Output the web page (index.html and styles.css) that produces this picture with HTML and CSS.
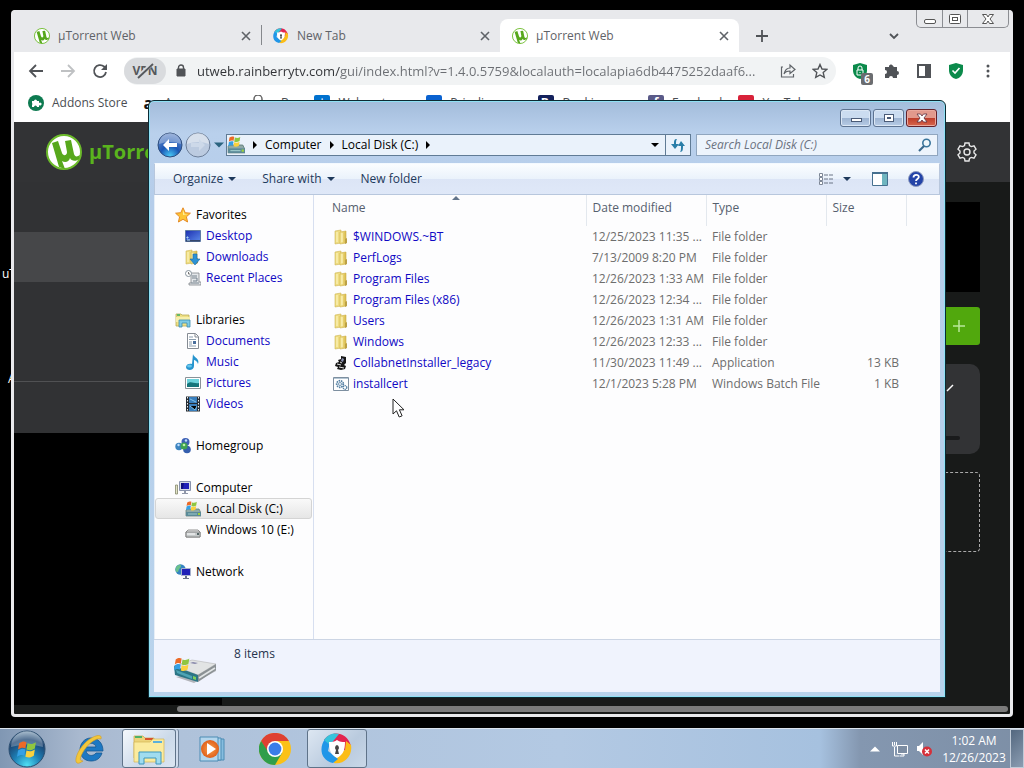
FILE: index.html
```html
<!DOCTYPE html>
<html lang="en">
<head>
  <meta charset="UTF-8">
  <meta name="viewport" content="width=device-width, initial-scale=1.0">
  <title>Local Disk (C:)</title>
  <link rel="stylesheet" href="styles.css">
</head>
<body>
  <svg class="defs" aria-hidden="true">
    <defs>
      <linearGradient id="gold" x1="0" x2="1"><stop offset="0" stop-color="#f8eb9c"/><stop offset="1" stop-color="#d9ba4b"/></linearGradient>
      <linearGradient id="screen" x1="0" x2="1" y2="1"><stop offset="0" stop-color="#1c2fb0"/><stop offset="1" stop-color="#5c8bea"/></linearGradient>
      <linearGradient id="metal" y2="1" x2="0"><stop offset="0" stop-color="#f4f4f4"/><stop offset="1" stop-color="#8d9295"/></linearGradient>
      <radialGradient id="orb" cx=".5" cy=".95" r=".95"><stop offset="0" stop-color="#4fe0f4"/><stop offset=".4" stop-color="#1d7fb5"/><stop offset=".75" stop-color="#1c4370"/><stop offset="1" stop-color="#8ea9bf"/></radialGradient>
      <radialGradient id="blueball" cx=".5" cy=".95" r=".9"><stop offset="0" stop-color="#49c9f5"/><stop offset=".45" stop-color="#1c57b5"/><stop offset="1" stop-color="#6b8fcb"/></radialGradient>
      <radialGradient id="orange"><stop offset="0" stop-color="#f9a04c"/><stop offset="1" stop-color="#e0601b"/></radialGradient>
    </defs>
    <symbol id="utorrent" viewBox="0 0 36 36">
      <circle cx="18" cy="18" r="17" fill="#fff" stroke="#6cbb2b" stroke-width="2"/>
      <path d="M6 9l6-2 4 12c1 3 5 3 5-1l-2-11 6-1 3 14c1 3 3 3 6 1l-1 4c-3 3-8 2-9-1-1 4-5 5-8 3l3 8-6-2z" fill="#57a81c"/>
    </symbol>
    <symbol id="secure" viewBox="0 0 32 32">
      <path d="M3 7C10-3 26-2 30 13l-6 5-8-10-8 4z" fill="#e3244f"/>
      <path d="M30 12c2 12-8 20-17 18l-1-7 12-6 1-9z" fill="#fbbd17"/>
      <path d="M12 30C-1 27-2 14 4 6l5 3-2 9 10 8z" fill="#2196e8"/>
      <path d="M3 7C8 0 14 0 18 1L9 12z" fill="#35c3dc"/>
      <path d="M16 7c3 2 5 2 8 2 0 8-2 13-8 16-6-3-8-8-8-16 3 0 5 0 8-2z" fill="#fff"/>
      <path d="M16 12a3 3 0 0 1 1 5l1 4h-4l1-4a3 3 0 0 1 1-5z" fill="#444"/>
    </symbol>
    <symbol id="close" viewBox="0 0 16 16"><path d="M4 4l8 8M12 4l-8 8" stroke="#5f6368" stroke-width="1.6"/></symbol>
    <symbol id="flag" viewBox="0 0 20 20">
      <path d="M2 4c3-2 5-2 7-1L8 9c-2-1-4-1-7 1z" fill="#ec6a27"/>
      <path d="M10 4c3 1 5 1 8-1l-1 6c-3 2-5 2-8 1z" fill="#8fc640"/>
      <path d="M1 11c3-2 5-2 7-1l-1 6c-2-1-4-1-7 1z" fill="#35a0e4"/>
      <path d="M9 11c3 1 5 1 8-1l-1 6c-3 2-5 2-8 1z" fill="#fbd13d"/>
    </symbol>
    <symbol id="disk" viewBox="0 0 16 16">
      <path d="M1 9l1-1h12l2 4v3H1z" fill="#8fa9a8" stroke="#587570" stroke-width=".7"/>
      <path d="M1 11h15v4H1z" fill="#5b8a98"/><path d="M3 13h9" stroke="#9ecacb"/><path d="M13 12h2v2h-2z" fill="#a0d33a"/>
      <use href="#flag" x="1" y="-1" width="12" height="12"/>
    </symbol>
    <symbol id="folder" viewBox="0 0 16 16">
      <path d="M2 2l6-1v13l-6 1z" fill="#eedc80" stroke="#cfb554" stroke-width=".6"/>
      <path d="M7 3l6-1v12l-6 1z" fill="url(#gold)" stroke="#cfae43" stroke-width=".6"/>
      <path d="M4 3v10M9 4v9" stroke="#fff8c9"/><path d="M12 10l2-1v5l-2 1z" fill="#bba045"/>
    </symbol>
    <symbol id="tri" viewBox="0 0 8 8"><path d="M0 2h8L4 6z" fill="currentColor"/></symbol>
    <symbol id="right" viewBox="0 0 8 8"><path d="M2 0v8l4-4z" fill="currentColor"/></symbol>
  </svg>

  <main class="desktop">
    <span class="desk-label label-one">uTorrent</span>
    <span class="desk-label label-two">Apps</span>

    <!-- Browser -->
    <section class="browser">
      <div class="tab-strip">
        <div class="tab">
          <svg class="i16"><use href="#utorrent"/></svg><span>µTorrent Web</span>
          <button aria-label="Close tab"><svg class="i16"><use href="#close"/></svg></button>
        </div>
        <div class="tab divided">
          <svg class="i16"><use href="#secure"/></svg><span>New Tab</span>
          <button aria-label="Close tab"><svg class="i16"><use href="#close"/></svg></button>
        </div>
        <div class="tab active">
          <svg class="i16"><use href="#utorrent"/></svg><span>µTorrent Web</span>
          <button aria-label="Close tab"><svg class="i16"><use href="#close"/></svg></button>
        </div>
        <button class="new-tab" aria-label="New tab"><svg class="i16" viewBox="0 0 16 16"><path d="M8 2v12M2 8h12" stroke="#505357" stroke-width="1.8"/></svg></button>
        <button class="tab-search" aria-label="Search tabs"><svg class="i16" viewBox="0 0 16 16"><path d="M4 6l4 4 4-4" fill="none" stroke="#505357" stroke-width="1.8"/></svg></button>
        <div class="caption ghost">
          <button aria-label="Minimize"><svg viewBox="0 0 16 12"><rect x="2.500" y="6.500" width="11" height="4" rx="1.500" fill="#fff" stroke="#555"/></svg></button>
          <button aria-label="Maximize"><svg viewBox="0 0 16 12"><rect x="2.500" y="1.500" width="11" height="9" rx="1" fill="#fff" stroke="#555"/><rect x="5.500" y="4.500" width="5" height="3" fill="#fff" stroke="#555"/></svg></button>
          <button class="wide" aria-label="Close"><svg viewBox="0 0 16 12"><path d="M2.500 1.500h4L8 4l1.500-2.500h4L10 6l3.500 4.500h-4L8 8l-1.500 2.500h-4L6 6z" fill="#fff" stroke="#555"/></svg></button>
        </div>
      </div>

      <div class="toolbar">
        <button aria-label="Back"><svg class="i16" viewBox="0 0 16 16"><path d="M15 8H2M8 2L2 8l6 6" fill="none" stroke="#505357" stroke-width="1.8"/></svg></button>
        <button aria-label="Forward"><svg class="i16" viewBox="0 0 16 16"><path d="M1 8h13M8 2l6 6-6 6" fill="none" stroke="#bfc1c3" stroke-width="1.800"/></svg></button>
        <button aria-label="Reload"><svg class="i16" viewBox="0 0 16 16"><path d="M14 9a6 6 0 1 1-2-5.500l2 2" fill="none" stroke="#505357" stroke-width="1.800"/><path d="M15 1v6H9z" fill="#505357"/></svg></button>
        <div class="omnibox">
          <button class="vpn" aria-label="VPN off">VPN<svg viewBox="0 0 24 16"><path d="M5 14L19 1" stroke="#d9dbde" stroke-width="4"/><path d="M5 15L20 1" stroke="#55585c" stroke-width="1.800"/></svg></button>
          <svg class="lock" viewBox="0 0 12 14"><path d="M2 5h8v7H2z" fill="#505357" stroke="#505357"/><path d="M3.500 6V3.500a2.500 2.500 0 0 1 5 0V6" fill="none" stroke="#505357" stroke-width="1.400"/></svg>
          <input type="text" aria-label="Address" value="utweb.rainberrytv.com/gui/index.html?v=1.4.0.5759&amp;localauth=localapia6db4475252daaf6...">
          <button aria-label="Share"><svg class="i16" viewBox="0 0 16 16"><path d="M3 4H1.500v10h12v-3M4 11c1-4 3-6 6-6V2l5 4.500-5 4V8c-3 0-5 1-6 3z" fill="none" stroke="#5f6368" stroke-width="1.200"/></svg></button>
          <button aria-label="Bookmark"><svg class="i16" viewBox="0 0 16 16"><path d="M8 1.500l2 4.500 4.800.4-3.600 3.200 1.100 4.800L8 12l-4.300 2.400 1.100-4.800L1.200 6.400 6 6z" fill="none" stroke="#505357" stroke-width="1.400"/></svg></button>
        </div>
        <button class="badged" aria-label="Ad blocker"><svg class="i16" viewBox="0 0 16 16"><path d="M8 0l7 2v5c0 5-3 8-7 9-4-1-7-4-7-9V2z" fill="#0b8a4b"/><path d="M5 7h6v5H5zM6 7V5a2 2 0 0 1 4 0v2M8 9v1" fill="none" stroke="#fff"/></svg><span class="badge">6</span></button>
        <button aria-label="Extensions"><svg class="i16" viewBox="0 0 16 16"><path d="M1 4h4a2 2 0 1 1 4-1l1 1h3v4a2 2 0 1 1 0 4v3H9a2 2 0 1 0-4 0H1v-4a2 2 0 1 0 0-4z" fill="#505357"/></svg></button>
        <button aria-label="Side panel"><svg class="i16" viewBox="0 0 16 16"><path d="M2 2h12v12H2z" fill="none" stroke="#505357" stroke-width="2"/><path d="M9 2h5v12H9z" fill="#505357"/></svg></button>
        <button aria-label="Protection"><svg class="i16" viewBox="0 0 16 16"><path d="M8 0l7 2v5c0 5-3 8-7 9-4-1-7-4-7-9V2z" fill="#0b8a4b"/><path d="M4.500 7.500L7 10l4.500-5" fill="none" stroke="#fff" stroke-width="1.600"/></svg></button>
        <button aria-label="Menu"><svg class="i16" viewBox="0 0 16 16"><g fill="#505357"><circle cx="8" cy="3" r="1.500"/><circle cx="8" cy="8" r="1.500"/><circle cx="8" cy="13" r="1.500"/></g></svg></button>
      </div>

      <nav class="bookmarks">
        <a href="#"><svg class="i16" viewBox="0 0 16 16"><circle cx="8" cy="8" r="8" fill="#0d7a50"/><path d="M4 6h2a1.500 1.500 0 1 1 3 0h2v2a1.500 1.500 0 1 1 0 2v2H9a1 1 0 0 0-3 0H4v-2a1.500 1.500 0 0 0 0-2z" fill="#fff"/></svg>Addons Store</a>
        <a href="#"><span class="fav amazon">a</span>Amazon.com</a>
        <a href="#"><svg class="i16" viewBox="0 0 16 16"><path d="M4 8V4a4 4 0 0 1 8 0v4" fill="none" stroke="#666" stroke-width="1.500"/></svg>eBay</a>
        <a href="#"><span class="fav walmart">✶</span>Walmart.com</a>
        <a href="#"><span class="fav priceline">p</span>Priceline.com</a>
        <a href="#"><span class="fav booking">B.</span>Booking.com</a>
        <a href="#"><span class="fav facebook">f</span>Facebook</a>
        <a href="#"><span class="fav youtube"></span>YouTube</a>
      </nav>

      <div class="page">
        <header class="page-head">
          <svg class="logo"><use href="#utorrent"/></svg>
          <span class="brand">µTorrent</span>
          <button class="settings" aria-label="Settings"><svg viewBox="0 0 20 20"><path d="M8 1h4l.5 2.600 1.800 1L17 3.800l2 3.400-2 1.800v2l2 1.800-2 3.400-2.700-.8-1.800 1L12 19H8l-.5-2.600-1.800-1L3 16.200l-2-3.400L3 11V9L1 7.200l2-3.400 2.700.8 1.800-1z" fill="none" stroke="#e8e8e8" stroke-width="1.400"/><circle cx="10" cy="10" r="3" fill="none" stroke="#e8e8e8" stroke-width="1.400"/></svg></button>
        </header>
        <div class="page-body">
          <div class="side">
            <div class="side-top"></div>
            <div class="side-active"></div>
            <div class="side-list"></div>
            <div class="side-foot"></div>
          </div>
          <div class="content">
            <div class="player"></div>
            <button class="add" aria-label="Add torrent"><svg class="i16" viewBox="0 0 16 16"><path d="M8 2v12M2 8h12" stroke="#b9e89a" stroke-width="1.500"/></svg></button>
            <div class="card"><svg class="card-tick" viewBox="0 0 8 8"><path d="M1 7l6-6" stroke="#fff" stroke-width="1.400"/></svg><div class="bar"></div></div>
            <div class="drop"></div>
          </div>
        </div>
        <div class="h-scroll"><div class="thumb"></div></div>
      </div>
    </section>

    <!-- Explorer -->
    <section class="explorer">
      <div class="title-bar">
        <div class="caption">
          <button aria-label="Minimize"><svg viewBox="0 0 16 12"><rect x="3.500" y="6.500" width="10" height="3" fill="#fff" stroke="#4a5b77"/></svg></button>
          <button aria-label="Maximize"><svg viewBox="0 0 16 12"><rect x="3.500" y="2.500" width="9" height="7" fill="#fff" stroke="#4a5b77"/><rect x="6.500" y="5.500" width="3" height="1" fill="#8aa0c0" stroke="#4a5b77"/></svg></button>
          <button class="red" aria-label="Close"><svg viewBox="0 0 16 12"><path d="M3 2h3.500L8 4l1.500-2H13L10 6l3 4H9.500L8 8l-1.500 2H3l3-4z" fill="#fff" stroke="#5b3040" stroke-width=".8"/></svg></button>
        </div>
      </div>

      <div class="nav-row">
        <div class="travel">
          <button aria-label="Back"><svg class="i26" viewBox="0 0 26 26"><circle cx="13" cy="13" r="12" fill="url(#blueball)" stroke="#2f4d7d"/><path d="M2 12a11 11 0 0 1 22 0q-11-4-22 0z" fill="#fff" opacity=".3"/><path d="M6 13l6-6v4h8v4h-8v4z" fill="#fff"/></svg></button>
          <button aria-label="Forward"><svg class="i26" viewBox="0 0 26 26"><circle cx="13" cy="13" r="12" fill="#bccbe0" stroke="#6d7f99"/><path d="M2 12a11 11 0 0 1 22 0q-11-4-22 0z" fill="#fff" opacity=".4"/><path d="M20 13l-6-6v4H6v4h8v4z" fill="#cdd9e9"/></svg></button>
          <button aria-label="Recent pages"><svg class="i10 recent"><use href="#tri"/></svg></button>
        </div>
        <div class="address">
          <svg class="i18"><use href="#disk"/></svg>
          <svg class="i8"><use href="#right"/></svg>
          <button>Computer</button>
          <svg class="i8"><use href="#right"/></svg>
          <button>Local Disk (C:)</button>
          <svg class="i8"><use href="#right"/></svg>
          <button class="history" aria-label="Previous locations"><svg class="i8"><use href="#tri"/></svg></button>
          <button class="refresh" aria-label="Refresh"><svg class="i16" viewBox="0 0 16 16"><path d="M7 2C4 2 4 4 4 7H1l4 5 4-5H6c0-2 0-4 1-5zM10 15c3 0 3-3 3-6h2l-4-5-3 5h3c0 3 0 5-1 6z" fill="#2a7ea8"/></svg></button>
        </div>
        <label class="search">
          <input type="text" placeholder="Search Local Disk (C:)" aria-label="Search Local Disk (C:)">
          <svg class="i14" viewBox="0 0 14 14"><circle cx="8.500" cy="5" r="3.700" fill="#eef6fb" stroke="#39759c" stroke-width="1.600"/><path d="M6 8l-5 5" stroke="#39688c" stroke-width="2.200"/></svg>
        </label>
      </div>

      <div class="command-bar">
        <button>Organize<svg class="i8"><use href="#tri"/></svg></button>
        <button>Share with<svg class="i8"><use href="#tri"/></svg></button>
        <button>New folder</button>
        <div class="command-right">
          <button aria-label="Change view"><svg class="i16" viewBox="0 0 16 16"><path d="M1.500 2.500h3v3h-3zM1.500 6.500h3v3h-3zM1.500 10.500h3v3h-3z" fill="#fff" stroke="#7d8796"/><path d="M6 4h4M11 4h4M6 8h4M11 8h4M6 12h4M11 12h4" stroke="#6b7585"/></svg></button>
          <button aria-label="More views"><svg class="i8"><use href="#tri"/></svg></button>
          <button aria-label="Preview pane"><svg class="i16" viewBox="0 0 16 16"><path d="M.5 1.500h15v13H.5z" fill="#fff" stroke="#46708f"/><path d="M0 2h16" stroke="#46708f" stroke-width="2"/><path d="M10 3h5v11h-5z" fill="#6fb5bf"/></svg></button>
          <button aria-label="Help"><svg class="i16" viewBox="0 0 16 16"><circle cx="8" cy="8" r="7.500" fill="#2444a8" stroke="#8f9cc0"/><path d="M5.500 6.500C5.500 3 11 3 10.800 6.200 10.500 8 8 8 8 10M8 11.500v1.800" fill="none" stroke="#fff" stroke-width="1.800"/></svg></button>
        </div>
      </div>

      <div class="panes">
        <nav class="tree">
          <div class="group">
            <a class="head" href="#"><svg class="i16" viewBox="0 0 16 16"><path d="M8 .8l2.200 4.900 5.200.5-4 3.600 1.200 5.200L8 12.300 3.400 15l1.200-5.200-4-3.600 5.200-.5z" fill="#fdc534" stroke="#e58a25"/><path d="M8 3l1.500 4H13l-5 1z" fill="#fff0a0"/></svg>Favorites</a>
            <a href="#"><svg class="i16" viewBox="0 0 16 16"><path d="M.5 2.500h15v11H.5z" fill="url(#screen)" stroke="#5f7ba5"/><path d="M1 12h14v1.500H1z" fill="#34466b"/><path d="M2 9h1v1H2zM2 12h3" stroke="#b4e0ff"/></svg>Desktop</a>
            <a href="#"><svg class="i16" viewBox="0 0 16 16"><use href="#folder" x="-1" width="16" height="16"/><path d="M8 5h4v5h3l-5 6-5-6h3z" fill="#2c92d5" stroke="#1d6aa6" stroke-width=".6"/></svg>Downloads</a>
            <a href="#"><svg class="i16" viewBox="0 0 16 16"><path d="M5 3h9v9h2v3H4v-2h2V4z" fill="#e4e7ea" stroke="#80868c" stroke-width=".8"/><path d="M7 6h5M7 8h5v3H8M6 13h8" stroke="#75818c" fill="none"/><circle cx="3.500" cy="3.500" r="3" fill="#fff" stroke="#87939d"/><path d="M3.500 2v2H5" stroke="#555" fill="none" stroke-width=".8"/></svg>Recent Places</a>
          </div>
          <div class="group">
            <a class="head" href="#"><svg class="i16" viewBox="0 0 16 16"><path d="M1 2h5l1 1h7v11H1z" fill="#eedf84" stroke="#b8ab55" stroke-width=".8"/><path d="M2 2h3v2H2z" fill="#65b968"/><path d="M1 5h14v5H1z" fill="#f7efaa"/><path d="M4 8h11v7h-3v-4H7v4H4z" fill="#7ecbe5" stroke="#3d8eb1" stroke-width=".8"/></svg>Libraries</a>
            <a href="#"><svg class="i16" viewBox="0 0 16 16"><path d="M2.500.5h8l3 3v12h-11z" fill="#fff" stroke="#858b93"/><path d="M10 1v3h3" fill="none" stroke="#858b93"/><path d="M4 4h4M4 6.500h7M4 9h3M4 11h3M4 13h7" stroke="#8b9dae"/><path d="M8 8h3v3H8z" fill="#496e9c"/></svg>Documents</a>
            <a href="#"><svg class="i16" viewBox="0 0 16 16"><path d="M8 0c1 4 7 4 5 10-1-3-3-4-4-4v6c0 5-8 5-8 1 0-3 4-4 6-3z" fill="#2694ce"/><ellipse cx="4.500" cy="12" rx="2.500" ry="1.500" fill="#66c5ec"/></svg>Music</a>
            <a href="#"><svg class="i16" viewBox="0 0 16 16"><path d="M.5 2.500h15v11H.5z" fill="#fff" stroke="#8a9298"/><path d="M2 4h12v8H2z" fill="#6dd3dc"/><path d="M2 9c4-4 6 0 12-1v4H2z" fill="#16757b"/></svg>Pictures</a>
            <a href="#"><svg class="i16" viewBox="0 0 16 16"><path d="M1 .5h14v15H1z" fill="#252d35"/><path d="M4 1h8v6H4zM4 8h8v7H4z" fill="#397ebc"/><path d="M5 3l6 3M5 10l5 4 2-4" stroke="#80c3eb"/><path d="M2.500 1v14M13.500 1v14" stroke="#eee" stroke-dasharray="1.500 1.500"/></svg>Videos</a>
          </div>
          <div class="group">
            <a class="head" href="#"><svg class="i16" viewBox="0 0 16 16"><circle cx="10.500" cy="4" r="4" fill="#3e60b5"/><circle cx="4" cy="8.500" r="3.700" fill="#3c84c0"/><circle cx="12" cy="11.500" r="3.800" fill="#355fae"/><circle cx="9" cy="8" r="3.500" fill="#3fa252"/><circle cx="9" cy="7" r="1.300" fill="#baf0a6"/><circle cx="11" cy="2.500" r="1.200" fill="#bfe0ff"/><circle cx="3.500" cy="7" r="1.200" fill="#bfe0ff"/></svg>Homegroup</a>
          </div>
          <div class="group">
            <a class="head" href="#"><svg class="i16" viewBox="0 0 16 16"><path d="M.5 5h2v9h-2z" fill="#e2e4c6" stroke="#85886c" stroke-width=".8"/><path d="M4.500 1.500h11v9h-11z" fill="#d6dbe4" stroke="#8993ad"/><path d="M6 3h8v6H6z" fill="#2020b8"/><path d="M6 3h3l-1 6H6z" fill="#101080"/><path d="M9 11h2v2h2v1H7v-1h2z" fill="#9198a9"/></svg>Computer</a>
            <a class="plain selected" href="#"><svg class="i16"><use href="#disk"/></svg>Local Disk (C:)</a>
            <a class="plain" href="#"><svg class="i16" viewBox="0 0 16 16"><path d="M1 10l2-2h10l2 2v5H1z" fill="url(#metal)" stroke="#777" stroke-width=".8"/><path d="M1 10h14v5H1z" fill="#c6cacb" stroke="#777" stroke-width=".8"/><path d="M2 12h8" stroke="#fff"/><path d="M12 11h2v2h-2z" fill="#566"/></svg>Windows 10 (E:)</a>
          </div>
          <div class="group">
            <a class="head" href="#"><svg class="i16" viewBox="0 0 16 16"><circle cx="5.500" cy="5.500" r="5.200" fill="#3483c0"/><path d="M2 2c4-3 5 0 3 2S4 8 2 8 0 4 2 2z" fill="#6bc18c"/><path d="M6.500 4.500h9v7h-9z" fill="#2020b8" stroke="#a6b1cd"/><path d="M10 12h2v2h2v1H8v-1h2z" fill="#68718a"/></svg>Network</a>
          </div>
        </nav>

        <div class="list">
          <table>
            <thead>
              <tr><th class="c-name" aria-sort="ascending">Name<svg class="sort i8" viewBox="0 0 8 8"><path d="M0 5h8L4 1z" fill="#62748a"/></svg></th><th class="c-date">Date modified</th><th class="c-type">Type</th><th class="c-size">Size</th><th class="c-rest"></th></tr>
            </thead>
            <tbody>
              <tr><td><a href="#"><svg class="i16"><use href="#folder"/></svg>$WINDOWS.~BT</a></td><td>12/25/2023 11:35 ...</td><td>File folder</td><td></td><td></td></tr>
              <tr><td><a href="#"><svg class="i16"><use href="#folder"/></svg>PerfLogs</a></td><td>7/13/2009 8:20 PM</td><td>File folder</td><td></td><td></td></tr>
              <tr><td><a href="#"><svg class="i16"><use href="#folder"/></svg>Program Files</a></td><td>12/26/2023 1:33 AM</td><td>File folder</td><td></td><td></td></tr>
              <tr><td><a href="#"><svg class="i16"><use href="#folder"/></svg>Program Files (x86)</a></td><td>12/26/2023 12:34 ...</td><td>File folder</td><td></td><td></td></tr>
              <tr><td><a href="#"><svg class="i16"><use href="#folder"/></svg>Users</a></td><td>12/26/2023 1:31 AM</td><td>File folder</td><td></td><td></td></tr>
              <tr><td><a href="#"><svg class="i16"><use href="#folder"/></svg>Windows</a></td><td>12/26/2023 12:33 ...</td><td>File folder</td><td></td><td></td></tr>
              <tr><td><a href="#"><svg class="i16" viewBox="0 0 16 16"><path d="M8 1l5 1v6l-2 2 2 1-1 3-4 1-4-1 1-2-3-1 1-3 3-1-1-2 3-1z" fill="#161616"/><path d="M9 3l2 1-1 3-2-1z" fill="#8a8fb0"/><path d="M4 9l4 1M6 12l5 1M7 7l2 1" stroke="#e4e4e4"/></svg>CollabnetInstaller_legacy</a></td><td>11/30/2023 11:49 ...</td><td>Application</td><td>13 KB</td><td></td></tr>
              <tr><td><a href="#"><svg class="i16" viewBox="0 0 16 16"><path d="M.5 1.500h15v13H.5z" fill="#fff" stroke="#7d8fa0"/><path d="M1 2.500h14" stroke="#b4c6d4"/><circle cx="7" cy="8" r="3.300" fill="none" stroke="#5480a4" stroke-width="1.800" stroke-dasharray="1.500 .8"/><circle cx="7" cy="8" r="1.500" fill="none" stroke="#5480a4" stroke-width=".8"/><circle cx="12" cy="11.500" r="1.800" fill="none" stroke="#5480a4" stroke-width="1.300" stroke-dasharray="1.200 .6"/></svg>installcert</a></td><td>12/1/2023 5:28 PM</td><td>Windows Batch File</td><td>1 KB</td><td></td></tr>
            </tbody>
          </table>
        </div>
      </div>

      <footer class="details">
        <svg class="drive" viewBox="0 0 46 30">
          <path d="M4 22l18 6 22-12v-3z" fill="#555" opacity=".4"/>
          <path d="M2 11L20 5l24 4-18 11z" fill="#e2e4e4" stroke="#aaa" stroke-width=".5"/>
          <path d="M26 20l18-11v6L26 27z" fill="#8b9194"/><path d="M27 23l16-10" stroke="#e2e5e6" stroke-width="1.500"/>
          <path d="M2 11l24 9v7L3 20z" fill="#2c7585"/><path d="M4 15l16 6v3L5 18z" fill="#4da4b4"/><path d="M21 21l3 1v3l-3-1z" fill="#7fd05b"/>
          <path d="M21 7l5 1-3 1-5-1z" fill="#88a"/>
          <use href="#flag" x="2" y="1" width="17" height="17"/>
        </svg>
        <span>8 items</span>
      </footer>
    </section>

    <svg class="cursor" viewBox="0 0 14 21"><path d="M1 1v15l3.500-3.200L7.200 19l2.900-1.200-2.700-6H12z" fill="#fff" stroke="#222"/></svg>
  </main>

  <footer class="taskbar">
    <button class="start" aria-label="Start"><svg viewBox="0 0 38 38"><circle cx="19" cy="19" r="18" fill="url(#orb)" stroke="#2c4e70"/><path d="M3 17a16 16 0 0 1 32 0q-16-5-32 0z" fill="#fff" opacity=".25"/><use href="#flag" x="9" y="9" width="21" height="21"/></svg></button>
    <button class="app" aria-label="Internet Explorer"><svg class="i32" viewBox="0 0 32 32"><path d="M17 5c7 0 12 5 12 13H12c1 5 7 6 10 2h6c-2 6-6 8-11 8C10 28 6 23 6 17S10 5 17 5zm-5 9h10c-1-5-9-5-10 0z" fill="#1d78c3" stroke="#175890" stroke-width=".8"/><path d="M27 6c2-6-8-4-16 4S0 28 3 30c2 1 4-1 6-2-3 0-4-2 0-9S22 4 27 6z" fill="#f2c73c" stroke="#d29c22" stroke-width=".6"/></svg></button>
    <button class="app open stacked" aria-label="Windows Explorer"><svg class="i32" viewBox="0 0 32 32"><path d="M1 3h9l2 2h9v20H1z" fill="#edd47b" stroke="#c9a545" stroke-width=".7"/><path d="M2 3h7v2H2z" fill="#4fb167"/><path d="M12 5h8v2h-8z" fill="#d8532d"/><path d="M1 9h16l3-3h11v23H1z" fill="#fbeb9e" stroke="#d3b553" stroke-width=".7"/><path d="M20 8h9v2h-9z" fill="#5bb0db"/><path d="M6 19h22v12h-5v-6H11v6H6z" fill="#a0dcf0" stroke="#3d97be"/></svg></button>
    <button class="app" aria-label="Media Player"><svg class="i32" viewBox="0 0 32 32"><path d="M10 6h18v21H10z" fill="#86bddf" stroke="#4d8cb4"/><path d="M7 5h18v22H7z" fill="#a6d2ec" stroke="#4d8cb4"/><path d="M4 4h18v24H4z" fill="#b4d6ed" stroke="#4d8cb4"/><circle cx="14" cy="16" r="9" fill="url(#orange)"/><path d="M11 10v12l9-6z" fill="#fff"/></svg></button>
    <button class="app" aria-label="Chrome"><svg class="i32" viewBox="0 0 32 32"><circle cx="16" cy="16" r="16" fill="#fbc116"/><path d="M2.100 8A16 16 0 0 1 29.900 8H16l-7 12z" fill="#de4032"/><path d="M2.100 8A16 16 0 0 0 16 32l7-12-13 0z" fill="#2f9e4b"/><circle cx="16" cy="16" r="8" fill="#fff"/><circle cx="16" cy="16" r="6.400" fill="#3a7de8"/></svg></button>
    <button class="app open secure" aria-label="Secure Browser"><svg class="i32"><use href="#secure"/></svg></button>
    <div class="tray">
      <button aria-label="Show hidden icons"><svg class="i10" viewBox="0 0 8 8"><path d="M0 6h8L4 2z" fill="#fff"/></svg></button>
      <button aria-label="Network"><svg class="i16" viewBox="0 0 16 16"><path d="M5.500 4.500h10v8h-10z" fill="#7d8da2" stroke="#fff"/><path d="M9 13h3v2H8M2.500 6v9h5M.5 1v4h4V1M2.500 1v3" fill="none" stroke="#fff"/></svg></button>
      <button aria-label="Volume muted"><svg class="i16" viewBox="0 0 16 16"><path d="M1 5h2l4-4v13l-4-4H1z" fill="#fff"/><circle cx="11" cy="10.500" r="5" fill="#d5303a"/><path d="M9 8.500l4 4M13 8.500l-4 4" stroke="#fff" stroke-width="1.500"/></svg></button>
      <time class="clock">1:02 AM<br>12/26/2023</time>
      <button class="show-desktop" aria-label="Show desktop"></button>
    </div>
  </footer>
</body>
</html>
```
FILE: styles.css
```css
* {
  box-sizing: border-box;
}

body {
  margin: 0;
  height: 100vh;
  display: flex;
  flex-direction: column;
  overflow: hidden;
  background: #000;
  font-family: "Open Sans", "Noto Sans", sans-serif;
  font-size: 12px;
  line-height: 16px;
}

button {
  display: flex;
  align-items: center;
  justify-content: center;
  padding: 0;
  border: none;
  background: none;
  color: inherit;
  font: inherit;
}

input {
  min-width: 0;
  border: none;
  outline: none;
  background: none;
  font: inherit;
}

a {
  text-decoration: none;
}

svg {
  display: block;
  flex: none;
}

.defs {
  position: absolute;
  width: 0;
  height: 0;
}

.i8 { width: 8px; height: 8px; }
.i10 { width: 10px; height: 10px; }
.i14 { width: 14px; height: 14px; }
.i16 { width: 16px; height: 16px; }
.i18 { width: 18px; height: 18px; }
.i26 { width: 26px; height: 26px; }
.i32 { width: 32px; height: 32px; }

.desktop {
  position: relative;
  flex: 1;
  min-height: 0;
}

.desk-label {
  position: absolute;
  color: #fff;
}

.label-one {
  top: 266px;
  left: 2px;
}

.label-two {
  top: 371px;
  left: 8px;
}

/* Browser window */
.browser {
  position: absolute;
  inset: 10px 11px 11px;
  display: flex;
  flex-direction: column;
  border: solid #e9e9ec;
  border-width: 0 3px 3px;
  border-radius: 4px;
  background: #fff;
  overflow: hidden;
}

.tab-strip {
  display: flex;
  align-items: flex-end;
  height: 42px;
  padding-left: 8px;
  background: #e8e9ec;
  color: #5f6368;
}

.tab {
  display: flex;
  align-items: center;
  gap: 8px;
  width: 239px;
  height: 33px;
  padding: 0 7px 0 12px;
}

.tab span {
  flex: 1;
}

.tab.divided {
  background: linear-gradient(#85888c, #85888c) 0 6px / 1px 20px no-repeat;
}

.tab.active {
  background: #fff;
  border-radius: 8px 8px 0 0;
}

.new-tab {
  width: 46px;
  height: 33px;
}

.tab-search {
  width: 32px;
  height: 33px;
  margin-left: auto;
}

.caption {
  display: flex;
}

.caption svg {
  width: 16px;
  height: 12px;
}

.caption.ghost {
  align-self: flex-start;
  margin: 0 1px 0 6px;
  border: 1px solid #8b8d92;
  border-top: none;
  border-radius: 0 0 5px 5px;
}

.ghost button {
  width: 25px;
  height: 17px;
}

.ghost button + button {
  border-left: 1px solid #8b8d92;
}

.ghost .wide {
  width: 41px;
}

.toolbar {
  display: flex;
  align-items: center;
  height: 38px;
  padding: 0 6px;
}

.toolbar button {
  width: 32px;
  height: 28px;
}

.omnibox {
  flex: 1;
  display: flex;
  align-items: center;
  height: 28px;
  margin: 0 8px;
  border-radius: 14px;
  background: #f1f3f4;
}

.omnibox input {
  flex: 1;
  padding: 0;
  font-size: 13px;
  background: linear-gradient(90deg, #303236 143px, #6b6e73 143px);
  background-clip: text;
  color: transparent;
  text-overflow: ellipsis;
}

.toolbar .vpn {
  position: relative;
  width: 42px;
  height: 26px;
  border-radius: 13px;
  background: #d9dbde;
  color: #55585c;
  font-weight: 700;
}

.vpn svg {
  position: absolute;
  inset: 5px 9px;
  width: 24px;
  height: 16px;
}

.lock {
  width: 12px;
  height: 14px;
  margin: 0 10px 0 9px;
}

.badged {
  position: relative;
}

.badge {
  position: absolute;
  right: 3px;
  bottom: 0;
  width: 12px;
  border-radius: 2px;
  background: #6b6d70;
  color: #fff;
  font-size: 10px;
  font-weight: 700;
  line-height: 12px;
}

.bookmarks {
  display: flex;
  gap: 13px;
  height: 32px;
  padding: 5px 14px 0;
  white-space: nowrap;
}

.bookmarks a {
  display: flex;
  gap: 8px;
  height: 16px;
  color: #4a4d52;
}

.fav {
  width: 16px;
  height: 16px;
  border-radius: 2px;
  color: #fff;
  font-weight: 700;
  text-align: center;
}

.amazon { color: #111; font-size: 16px; }
.walmart { background: #0071ce; }
.priceline { background: #0a62d0; }
.booking { background: #14215c; }
.facebook { background: #5a5a88; }
.youtube { background: #d8223a; }

/* Web app */
.page {
  flex: 1;
  min-height: 0;
  display: flex;
  flex-direction: column;
  background: #181a19;
}

.page-head {
  display: flex;
  align-items: center;
  height: 60px;
  padding: 0 32px;
  background: #323335;
}

.logo {
  width: 36px;
  height: 36px;
}

.brand {
  margin-left: 7px;
  color: #5ab41d;
  font-size: 20px;
  font-weight: 700;
  line-height: 28px;
}

.settings {
  margin-left: auto;
}

.settings svg {
  width: 22px;
  height: 20px;
}

.page-body {
  flex: 1;
  min-height: 0;
  display: flex;
}

.side {
  display: flex;
  flex-direction: column;
  width: 208px;
  background: #000;
}

.side-top {
  height: 50px;
  background: #313234;
}

.side-active {
  height: 50px;
  background: #464749;
}

.side-list {
  height: 100px;
  border-bottom: 1px solid #505153;
  background: #313234;
}

.side-foot {
  height: 51px;
  background: #313234;
}

.content {
  flex: 1;
  display: flex;
  flex-direction: column;
  padding: 20px 30px 0;
}

.player {
  height: 90px;
  background: #000;
}

.add {
  align-self: flex-end;
  justify-content: flex-end;
  width: 120px;
  height: 38px;
  margin-top: 15px;
  padding-right: 13px;
  border-radius: 3px;
  background: #51a80d;
}

.card {
  display: flex;
  flex-direction: column;
  align-items: flex-end;
  justify-content: space-between;
  height: 90px;
  margin-top: 19px;
  padding: 20px 20px 14px;
  border-radius: 10px;
  background: #323335;
}

.card-tick {
  width: 20px;
  height: 8px;
}

.bar {
  width: 100%;
  height: 4px;
  border-radius: 2px;
  background: #1a1b1c;
}

.drop {
  height: 80px;
  margin-top: 18px;
  border: 1px dashed #aaa;
  border-radius: 4px;
}

.h-scroll {
  height: 9px;
  padding: 1px 2px 2px 163px;
}

.thumb {
  height: 6px;
  border-radius: 3px;
  background: #7b7b7b;
}

/* Explorer window */
.explorer {
  position: absolute;
  inset: 100px 78px 30px 148px;
  display: flex;
  flex-direction: column;
  padding: 0 5px 5px;
  border: 1px solid #0c2a33;
  border-radius: 6px 6px 0 0;
  background: linear-gradient(#a3bcdb, #b9d0ec 32px, #b6cdea 100px, #b9d3ec);
  box-shadow: inset 0 0 0 1px #8fe0f4;
}

.title-bar {
  display: flex;
  justify-content: flex-end;
  height: 31px;
  padding: 8px 3px 0 0;
}

.title-bar .caption {
  gap: 2px;
}

.title-bar button {
  width: 31px;
  height: 18px;
  border: 1px solid #5d7391;
  border-radius: 3px;
  background: linear-gradient(#cbdcf0 50%, #9cb3d1 50%, #b7cce6);
  box-shadow: inset 0 0 0 1px #dbe7f5;
}

.title-bar .red {
  border-color: #64212b;
  background: linear-gradient(#e2998d 50%, #bd3c2a 50%, #d8664d);
  box-shadow: inset 0 0 0 1px #eaa99e;
}

.nav-row {
  display: flex;
  align-items: center;
  height: 26px;
  padding: 0 2px 0 3px;
}

.travel {
  display: flex;
  align-items: center;
  gap: 2px;
  margin-right: 1px;
  border-radius: 13px;
}

.recent {
  color: #2b6480;
}

.travel button:last-child {
  width: 12px;
}

.address {
  flex: 1;
  display: flex;
  align-items: center;
  gap: 6px;
  height: 22px;
  border: 1px solid #607b95;
  background: #eaf2fb;
  color: #000;
}

.history {
  width: 20px;
  height: 20px;
  margin-left: auto;
}

.refresh {
  width: 25px;
  height: 20px;
  margin-left: -6px;
  border-left: 1px solid #607b95;
}

.search {
  display: flex;
  align-items: center;
  width: 242px;
  height: 22px;
  margin-left: 5px;
  padding: 0 5px 0 8px;
  border: 1px solid #90a6bf;
  background: #edf4fc;
}

.search input {
  flex: 1;
  padding: 0;
  font-style: italic;
}

.search input::placeholder {
  color: #6b7280;
}

.command-bar {
  display: flex;
  align-items: center;
  gap: 26px;
  height: 32px;
  margin-top: 5px;
  padding: 0 15px 0 18px;
  border: 1px solid #b8c7dd;
  border-top-color: #f3f9ff;
  background: linear-gradient(#fbfdff, #eaf2fb 50%, #dce5f6 50%, #dfe8f8);
  color: #1e395b;
}

.command-bar button {
  gap: 5px;
}

.command-right {
  display: flex;
  align-items: center;
  margin-left: auto;
}

.command-right button:nth-child(2) {
  width: 26px;
}

.command-right button:nth-child(3) {
  margin: 0 20px 0 12px;
}

.panes {
  flex: 1;
  min-height: 0;
  display: flex;
  background: #fdfdfe;
  border-left: 1px solid #e6eef7;
}

.tree {
  display: flex;
  flex-direction: column;
  gap: 21px;
  width: 159px;
  padding-top: 9px;
  border-right: 1px solid #d7dff0;
}

.tree a {
  display: flex;
  align-items: center;
  gap: 5px;
  height: 21px;
  padding-left: 29px;
  border: 1px solid transparent;
  color: #1008c4;
  white-space: nowrap;
}

.tree .head {
  padding-left: 19px;
  color: #000;
}

.tree .plain {
  color: #000;
}

.tree .selected {
  margin-right: 1px;
  border-color: #d4d4d4;
  border-radius: 3px;
  background: linear-gradient(#f9f9f9, #e6e6e6);
}

.list {
  flex: 1;
  min-width: 0;
}

table {
  width: 100%;
  table-layout: fixed;
  border-collapse: collapse;
  color: #6d6d6d;
}

th {
  position: relative;
  height: 31px;
  padding: 0 0 5px 6px;
  border-right: 1px solid #e3e8ee;
  color: #55606e;
  font-weight: 400;
  text-align: left;
}

.c-name { width: 272px; padding-left: 18px; }
.c-date { width: 120px; }
.c-type { width: 120px; }
.c-size { width: 80px; }
.c-rest { border-right: none; }

.sort {
  position: absolute;
  top: 0;
  left: 51%;
}

td {
  height: 21px;
  padding: 0 0 0 6px;
  white-space: nowrap;
}

td:first-child {
  padding-left: 19px;
}

td:nth-child(4) {
  padding-right: 7px;
  text-align: right;
}

td a {
  display: flex;
  align-items: center;
  gap: 4px;
  color: #1008c4;
}

.details {
  display: flex;
  gap: 16px;
  height: 53px;
  padding: 6px 18px;
  border-top: 1px solid #ccd5e4;
  background: #f0f3fd;
  color: #26334d;
}

.drive {
  width: 46px;
  height: 30px;
  margin-top: 9px;
}

.cursor {
  position: absolute;
  top: 398px;
  left: 392px;
  width: 14px;
  height: 21px;
}

/* Taskbar */
.taskbar {
  display: flex;
  align-items: center;
  height: 40px;
  padding-left: 8px;
  border-top: 1px solid #dbe4ee;
  background: linear-gradient(90deg, #8097b3, #a9b9cf 80px, #afc2da 180px, #b3c9e3 560px, #a6c1df 820px, #8497b0 860px, #7d8fa6);
}

.start {
  margin-right: 8px;
}

.start svg {
  width: 38px;
  height: 38px;
}

.app {
  width: 54px;
  height: 39px;
  margin-left: 9px;
}

.app + .open {
  margin-left: 5px;
}

.open {
  border: 1px solid #5f7389;
  border-radius: 3px;
  background: linear-gradient(135deg, #f4f8fc, #cbd9e9 60%, #dbe6f2);
}

.stacked {
  box-shadow: 2px 0 0 #cfdced, 3px 0 0 #6d8097;
}

.app.secure {
  width: 60px;
  background: linear-gradient(135deg, #dde7f2, #b9cade 60%, #c9d8e8);
}

.tray {
  display: flex;
  align-items: center;
  gap: 8px;
  height: 39px;
  margin-left: auto;
  color: #fff;
}

.tray button:first-child {
  margin-right: 4px;
}

.clock {
  width: 68px;
  line-height: 17px;
  text-align: center;
}

.show-desktop {
  width: 14px;
  height: 39px;
  margin-left: -6px;
  border: 1px solid #c0cbd8;
  background: linear-gradient(135deg, #53677f, #8b9db2);
}
```
